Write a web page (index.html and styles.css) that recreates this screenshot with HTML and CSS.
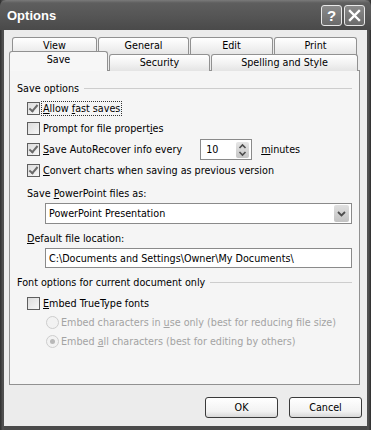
FILE: index.html
```html
<!DOCTYPE html>
<html>
 <head>
  <title>Options</title>
  <link rel="stylesheet" href="styles.css">
 </head>
 <body>
  <div class="window">
   <!-- Barra de título -->
   <div class="titlebar">
    <span class="title">Options</span>
    <div class="tbuttons">
     <span class="tbtn">?</span>
     <span class="tbtn">
      <svg width="13" height="13" viewBox="0 0 13 13"><path d="M2 2 L11 11 M11 2 L2 11" stroke="#fff" stroke-width="2.4" stroke-linecap="square"/></svg>
     </span>
    </div>
   </div>
   <div class="content">
    <!-- Pestañas -->
    <div class="tabs">
     <div class="tabrow back">
      <div class="tab" style="width:85px">View</div>
      <div class="tab" style="width:91px">General</div>
      <div class="tab" style="width:83px">Edit</div>
      <div class="tab" style="width:83px">Print</div>
     </div>
     <div class="tabrow front">
      <div class="tab sel" style="width:99px">Save</div>
      <div class="tab" style="width:101px">Security</div>
      <div class="tab" style="width:147px">Spelling and Style</div>
     </div>
    </div>
    <!-- Panel -->
    <div class="panel">
     <div class="group">
      <span>Save options</span><span class="line"></span>
     </div>
     <div class="check first"><span class="box on"></span><span class="lbl focus"><u>A</u>llow <u>f</u>ast saves</span></div>
     <div class="check"><span class="box"></span><span class="lbl">Prompt for file propert<u>i</u>es</span></div>
     <div class="check spin-row">
      <span class="box on"></span><span class="lbl"><u>S</u>ave AutoRecover info every</span>
      <div class="spin">
       <span class="spin-val">10</span>
       <span class="spin-btns">
        <svg width="11" height="16" viewBox="0 0 11 16"><path d="M2.5 6 L5.5 3 L8.5 6 M2.5 10 L5.5 13 L8.5 10" stroke="#4d4d4d" stroke-width="1.6" fill="none"/></svg>
       </span>
      </div>
      <span class="lbl"><u>m</u>inutes</span>
     </div>
     <div class="check"><span class="box on"></span><span class="lbl"><u>C</u>onvert charts when saving as previous version</span></div>

     <div class="field-label">Save <u>P</u>owerPoint files as:</div>
     <div class="select">
      <span>PowerPoint Presentation</span>
      <span class="drop">
       <svg width="9" height="6" viewBox="0 0 9 6"><path d="M1 1 L4.5 4.5 L8 1" stroke="#4d4d4d" stroke-width="1.8" fill="none"/></svg>
      </span>
     </div>
     <div class="field-label second"><u>D</u>efault file location:</div>
     <div class="textbox">C:\Documents and Settings\Owner\My Documents\</div>

     <div class="group second">
      <span>Font options for current document only</span><span class="line"></span>
     </div>
     <div class="check embed"><span class="box"></span><span class="lbl"><u>E</u>mbed TrueType fonts</span></div>
     <div class="radio"><span class="dot"></span><span class="lbl">Embed characters in <u>u</u>se only (best for reducing file size)</span></div>
     <div class="radio"><span class="dot on"></span><span class="lbl">Embed <u>a</u>ll characters (best for editing by others)</span></div>
    </div>
    <!-- Botones -->
    <div class="buttons">
     <div class="btn">OK</div>
     <div class="btn">Cancel</div>
    </div>
   </div>
  </div>
 </body>
</html>
```

FILE: styles.css
```css
/* Estilos generales */
body {
 margin: 0;
 font-family: "DejaVu Sans Condensed", "DejaVu Sans", sans-serif;
 font-stretch: condensed;
 font-size: 10.7px;
 color: #000;
}
.window {
 width: 371px;
 height: 430px;
 box-sizing: border-box;
 background: linear-gradient(90deg, #2e2e2e, #555 3px, #4a4a4a 4px, #4a4a4a 367px, #555 368px, #2e2e2e);
 display: flex;
 flex-direction: column;
}
/* Barra de título */
.titlebar {
 height: 30px;
 flex-shrink: 0;
 display: flex;
 align-items: center;
 justify-content: space-between;
 padding: 0 6px 0 7px;
 background: linear-gradient(#7a7a7a 0, #5e5e5e 3px, #565656 15px, #4a4a4a 100%);
 border-radius: 6px 6px 0 0;
}
.title {
 color: #fff;
 font-family: "Liberation Sans", Arial, sans-serif;
 font-stretch: normal;
 font-weight: bold;
 font-size: 13px;
 margin-top: 1px;
}
.tbuttons {
 display: flex;
 gap: 2px;
}
.tbtn {
 width: 19px;
 height: 19px;
 border: 1px solid #e8e8e8;
 border-radius: 3px;
 background: linear-gradient(#8a8a8a, #6a6a6a);
 color: #fff;
 font-family: "Liberation Sans", Arial, sans-serif;
 font-weight: bold;
 font-size: 15px;
 display: flex;
 align-items: center;
 justify-content: center;
}
.content {
 flex: 1;
 margin: 0 4px 4px 4px;
 background-color: #ececec;
 padding: 7px 0 0 5px;
}
/* Pestañas */
.tabs {
 display: flex;
 flex-direction: column;
}
.tabrow {
 display: flex;
}
.tabrow.back {
 padding-left: 3px;
 gap: 1px;
 height: 17px;
}
.tabrow.front {
 height: 17px;
}
.tab {
 box-sizing: border-box;
 height: 17px;
 border: 1px solid #919191;
 border-bottom: none;
 border-radius: 3px 3px 0 0;
 background: linear-gradient(#fff, #f0f0f0 60%, #e4e4e4);
 text-align: center;
 line-height: 16px;
}
.tabrow.back .tab {
 height: 18px;
}
.tab.sel {
 height: 20px;
 margin-top: -3px;
 background: #f7f7f7;
 position: relative;
 z-index: 1;
}
.tabrow.front .tab + .tab {
 margin-left: 1px;
}
/* Panel de opciones */
.panel {
 box-sizing: border-box;
 width: 351px;
 height: 315px;
 margin-top: -1px;
 border: 1px solid #919191;
 background-color: #f5f5f5;
 padding: 10px 7px 0 7px;
}
.group {
 display: flex;
 align-items: center;
 gap: 5px;
 height: 14px;
}
.group.second {
 margin-top: 7px;
}
.line {
 flex: 1;
 border-top: 1px solid #cdcdcd;
}
.check,
.radio {
 display: flex;
 align-items: center;
 height: 13px;
 margin-top: 7px;
 padding-left: 10px;
}
.check.embed {
 margin-top: 8px;
}
.box {
 box-sizing: border-box;
 width: 13px;
 height: 13px;
 border: 1px solid #5e5e5e;
 background: linear-gradient(135deg, #dcdcdc, #f6f6f6);
 margin-right: 3px;
 position: relative;
}
.box.on::after {
 content: "";
 position: absolute;
 left: 3px;
 top: 0px;
 width: 3px;
 height: 7px;
 border-right: 2px solid #6a6a6a;
 border-bottom: 2px solid #6a6a6a;
 transform: rotate(40deg);
}
.lbl.focus {
 outline: 1px dotted #333;
 padding: 0 1px;
 margin-left: -1px;
}
.spin-row {
 height: 21px;
 margin-top: 4px;
}
.spin-row + .check {
 margin-top: 4px;
}
.spin {
 box-sizing: border-box;
 width: 52px;
 height: 21px;
 border: 1px solid #8a8a8a;
 background-color: #fff;
 margin-left: 18px;
 margin-right: 9px;
 display: flex;
 align-items: center;
 justify-content: space-between;
 padding: 0 2px 0 5px;
}
.spin-btns {
 width: 13px;
 height: 16px;
 background: linear-gradient(#e6e6e6, #c6c6c6);
 border-radius: 2px;
 display: flex;
 align-items: center;
 justify-content: center;
}
.radio {
 padding-left: 29px;
 color: #a3a3a3;
 margin-top: 6px;
}
.dot {
 box-sizing: border-box;
 width: 13px;
 height: 13px;
 border: 1px solid #cdcdcd;
 border-radius: 50%;
 background: #f2f2f2;
 margin-right: 2px;
 position: relative;
}
.dot.on::after {
 content: "";
 position: absolute;
 left: 3px;
 top: 3px;
 width: 5px;
 height: 5px;
 border-radius: 50%;
 background: #b8b8b8;
}
.field-label {
 padding-left: 10px;
 margin-top: 10px;
 height: 14px;
 line-height: 14px;
}
.field-label.second {
 margin-top: 8px;
}
.select,
.textbox {
 box-sizing: border-box;
 margin-left: 28px;
 width: 307px;
 height: 21px;
 border: 1px solid #8a8a8a;
 background-color: #fff;
 margin-top: 2px;
 display: flex;
 align-items: center;
 padding-left: 3px;
}
.textbox {
 height: 20px;
}
.select {
 justify-content: space-between;
 padding-right: 2px;
}
.drop {
 width: 15px;
 height: 17px;
 background: linear-gradient(#e0e0e0, #c2c2c2);
 border-radius: 2px;
 display: flex;
 align-items: center;
 justify-content: center;
}
/* Botones inferiores */
.buttons {
 display: flex;
 justify-content: flex-end;
 gap: 11px;
 padding-right: 5px;
 margin-top: 12px;
}
.btn {
 box-sizing: border-box;
 width: 73px;
 height: 21px;
 border: 1px solid #3a3a3a;
 border-radius: 3px;
 background: linear-gradient(#fff, #f2f2f2 70%, #d8d8d8);
 text-align: center;
 line-height: 19px;
}
```
